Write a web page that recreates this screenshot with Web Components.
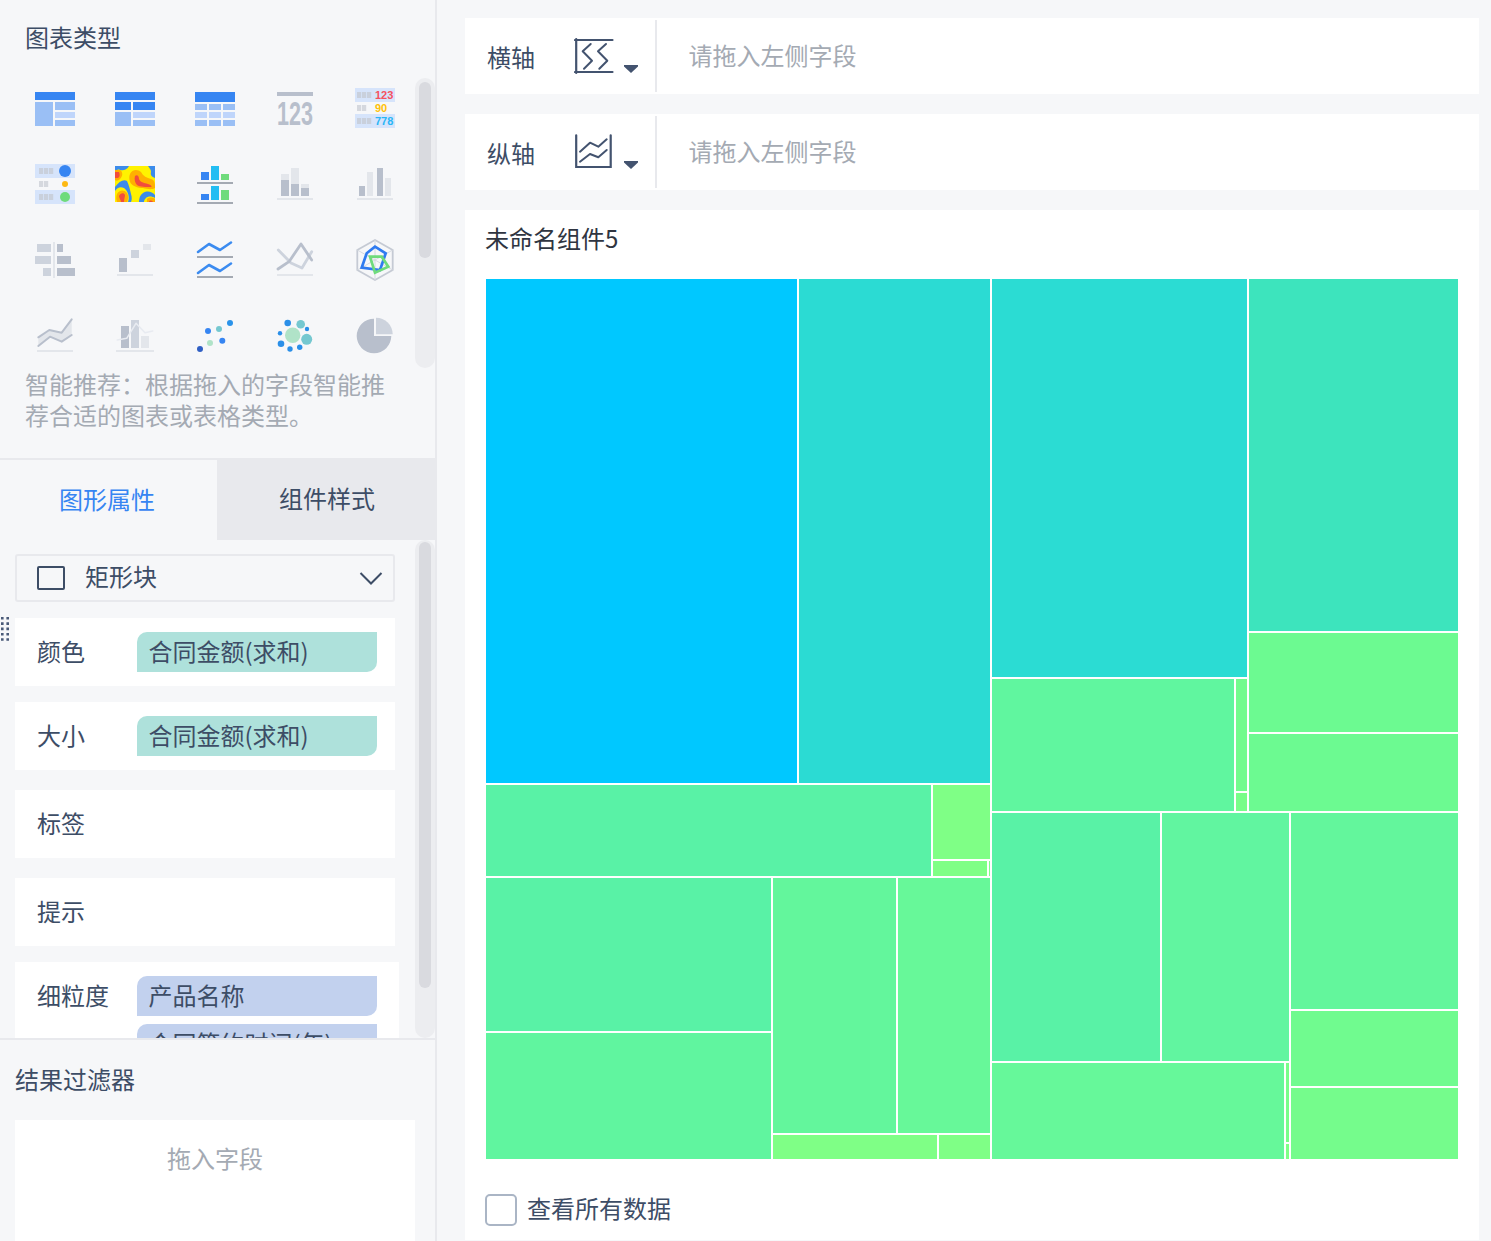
<!DOCTYPE html>
<html lang="zh">
<head>
<meta charset="utf-8">
<title>组件</title>
<style>
  html, body { margin: 0; height: 1241px; overflow: hidden; background: #f6f7f9; }
  body { font-family: "Noto Sans CJK SC", "Noto Sans", sans-serif; font-size: 24px; color: #3d4d66; }
</style>
</head>
<body>
<editor-page>
  <chart-types slot="top"></chart-types>
  <prop-tabs slot="tabs"></prop-tabs>
  <prop-panel slot="props">
    <shape-select>矩形块</shape-select>
    <prop-row label="颜色"><field-chip>合同金额(求和)</field-chip></prop-row>
    <prop-row label="大小"><field-chip>合同金额(求和)</field-chip></prop-row>
    <prop-row label="标签" style="margin-top:4px"></prop-row>
    <prop-row label="提示" style="margin-top:4px"></prop-row>
    <prop-row label="细粒度" wide>
      <field-chip kind="dim">产品名称</field-chip>
      <field-chip kind="dim">合同签约时间(年)</field-chip>
    </prop-row>
  </prop-panel>
  <result-filter slot="filter"></result-filter>
  <axis-bar slot="main" label="横轴" icon="x"></axis-bar>
  <axis-bar slot="main" label="纵轴" icon="y"></axis-bar>
  <chart-card slot="main" title="未命名组件5"></chart-card>
</editor-page>

<script>
const DARK = '#b8bfcc', MID = '#cdd3dd', LIGHT = '#e3e6eb', BLUE = '#3685f2', B2 = '#9abff5', B3 = '#bfd5fb', PALE = '#d6e4fb', GREEN = '#6fdb7c', CYAN = '#23bdf2', GRAY = '#a4aab3', INK = '#43536f';

function r(x, y, w, h, fill) {
  return `<rect x="${x}" y="${y}" width="${w}" height="${h}" fill="${fill}"/>`;
}
function line(pts, color, w) {
  return `<polyline points="${pts}" fill="none" stroke="${color}" stroke-width="${w}" stroke-linejoin="round" stroke-linecap="round"/>`;
}
function dot(x, y, rad, fill) {
  return `<circle cx="${x}" cy="${y}" r="${rad}" fill="${fill}"/>`;
}
// the blurry "text" blocks in the list icons
function blocks(x, y, n, fill) {
  let out = '';
  for (let i = 0; i < n; i++) out += r(x + i * 5, y, 4.2, 6, fill);
  return out;
}
const axis = r(2, 34, 36, 2, LIGHT);
const NUM = 'font-family="Liberation Sans" font-weight="700" font-size="11"';

// 40x40 icons of the chart type grid, in order
const CHART_ICONS = [
  r(0,4,40,8,BLUE) + r(0,14,18,24,B2) + r(20,14,20,8,B2) + r(20,24,20,6,B3) + r(20,32,20,6,B2),
  r(0,4,40,8,BLUE) + r(0,14,16,8,BLUE) + r(18,14,22,8,BLUE) + r(0,24,16,14,B2) + r(18,24,22,6,B3) + r(18,32,22,6,B2),
  r(0,4,40,10,BLUE) + [0,14,28].map(x => r(x,16,12,6,B2) + r(x,24,12,6,B3) + r(x,32,12,6,B2)).join(''),
  r(2,4,36,4,DARK) + `<text x="2" y="37" font-family="Liberation Sans" font-weight="700" font-size="33" fill="${DARK}" textLength="36" lengthAdjust="spacingAndGlyphs">123</text>`,
  r(0,0,40,14,PALE) + r(0,26,40,14,PALE) + blocks(2,4,3,'#c9d0dc') + blocks(2,17,2,'#d5d8de') + blocks(2,30,3,'#c9d0dc')
    + `<text x="20" y="10.5" ${NUM} fill="#f5515f">123</text><text x="20" y="23.5" ${NUM} fill="#ffc107">90</text><text x="20" y="36.5" ${NUM} fill="#29b6f6">778</text>`,

  r(0,0,40,14,PALE) + r(0,26,40,14,PALE) + blocks(4,4,3,'#c9d0dc') + blocks(4,17,2,'#d5d8de') + blocks(4,30,3,'#c9d0dc')
    + dot(30,7,6,BLUE) + dot(30,20,3,'#fdb913') + dot(30,33,5,GREEN),
  r(0,2,40,36,'#fff200')
    + `<path fill="#3b8beb" d="M0 2H14C12 6 8 7 5 6 3 5 1 6 0 8ZM33 2H40V14C37 13 35 11 36 8 36 5 34 4 33 2ZM0 23C4 18 8 15 12 17 14 21 15 26 16 30 17 33 17 36 16 38H13C15 33 13 27 9 24 5 22 2 24 0 27ZM28 29C33 26 37 28 40 31V34C37 32 33 32 31 34 29 36 29 37 29 38H24C24 34 25 31 28 29Z"/>`
    + `<path fill="#ffb000" d="M0 6H5C8 8 8 12 5 15 3 17 1 17 0 16ZM15 10C17 5 23 5 26 8 28 12 32 14 36 15 40 16 40 20 40 24 37 26 32 25 28 24 23 24 17 22 15 18 14 15 14 12 15 10ZM2 30C4 26 9 25 12 29 14 32 13 36 12 38H2C1 35 1 33 2 30ZM32 35C34 33 38 33 40 35V38H32Z"/>`
    + `<path fill="#f24c3d" d="M0 8H4C5 10 5 13 3 14H0ZM20 12C22 10 24 12 24 15 25 18 29 19 33 20 37 21 37 23 36 23 31 23 25 23 22 21 20 19 19 15 20 12ZM4 32C5 29 9 28 10 31 10 33 9 35 9 38H6C6 36 4 34 4 32ZM34 38C34 36 37 36 38 38Z"/>`,
  r(6,8,8,8,BLUE) + r(16,2,8,14,CYAN) + r(26,10,8,6,GREEN) + r(2,18,36,2,GRAY) + r(6,30,8,6,BLUE) + r(16,22,8,14,CYAN) + r(26,26,8,10,GREEN) + r(2,38,36,2,GRAY),
  r(6,10,8,6,LIGHT) + r(6,16,8,16,DARK) + r(16,4,8,16,LIGHT) + r(16,20,8,12,DARK) + r(26,20,8,4,LIGHT) + r(26,24,8,8,DARK) + axis,
  r(4,22,6,10,DARK) + r(12,8,6,24,LIGHT) + r(22,4,6,28,DARK) + r(30,14,6,18,LIGHT) + axis,

  r(18,2,2,36,LIGHT) + r(2,4,14,8,MID) + r(0,16,16,8,MID) + r(8,28,8,8,MID) + r(22,4,6,8,DARK) + r(22,16,14,8,DARK) + r(22,28,18,8,DARK),
  r(4,18,8,14,DARK) + r(16,10,8,8,MID) + r(28,4,8,6,LIGHT) + axis,
  line('3,12 14,4 25,10 36,2.5', '#3b8bf0', 2.6) + r(2,16,36,2,GRAY) + line('3,33 14,25 25,31 36,23.5', '#3b8bf0', 2.6) + r(2,36,36,2,GRAY),
  line('3.3,10 16,23 27,28 36.7,11.7', MID, 2.8) + line('3,29 14,21.7 26,4 36.7,20', DARK, 2.8) + axis,
  `<path d="M2.3 10 20 0 37.7 10V30L20 40 2.3 30Z" fill="none" stroke="#c5cad4" stroke-width="1.8"/><path d="M2.3 10 37.7 30M2.3 30 37.7 10M20 0V40" stroke="#d5d9e0" stroke-width="1" fill="none"/>`
    + `<path d="M20 6.7 30.7 13.3 25 30 6.7 27.7 11.7 13.3Z" fill="none" stroke="#2f7bf0" stroke-width="2.7"/><path d="M15 16.7H26.7L33.3 26.7 20 32.7Z" fill="none" stroke="${GREEN}" stroke-width="2.7"/>`,

  `<path d="M3.3 21.3 14.3 14 26.7 16.7 36.7 3.3V19L26.7 25.7 15 20.7 3.3 30Z" fill="${LIGHT}"/>` + line('3.3,21.3 14.3,14 26.7,16.7 36.7,3.3', DARK, 2) + line('3.3,30 15,20.7 26.7,25.7 36.7,19', DARK, 2) + axis,
  r(6,10,8,22,DARK) + r(16,4,8,28,MID) + r(26,20,8,12,LIGHT) + line('2.3,24 11.7,22.3 21,7.3 30,16.7 37.7,15', '#e8ebf1', 1.6) + r(1,34,38,2,LIGHT),
  dot(5,33,3,'#2f5fc4') + dot(13,15,3,BLUE) + dot(15,27,3,'#b0e3c8') + dot(24,13,3,'#75c8d0') + dot(27.3,24.7,3,BLUE) + dot(35,7,3,'#2a93ea'),
  dot(12.7,7,3.3,'#2a8fe8') + dot(25.7,8.3,4.3,'#75c8d0') + dot(32,13,2.2,'#2a8fe8') + dot(5,17.3,2.2,'#2a8fe8') + dot(17.7,19.3,7.7,'#b0e3c8') + dot(31.7,23.3,5.5,'#75c8d0') + dot(6,27.7,3.3,'#2a8fe8') + dot(15,33,2.7,'#2a8fe8') + dot(24.7,31.3,2.7,'#2a8fe8'),
  `<path d="M19 2.7A17.3 17.3 0 1 0 36.3 20H19Z" fill="${DARK}"/><path d="M21 1.8A16.5 16.5 0 0 1 37.7 18.3H21Z" fill="${MID}"/>`
];

class EditorPage extends HTMLElement {
  constructor() {
    super();
    this.attachShadow({ mode: 'open' }).innerHTML = `
      <style>
        :host { display: grid; grid-template-columns: 437px 1fr; height: 1241px; overflow: hidden; }
        .side { border-right: 2px solid #e8e9ed; display: flex; flex-direction: column; height: 1241px; overflow: hidden; box-sizing: border-box; }
        .main { display: flex; flex-direction: column; gap: 20px; padding: 18px 12px 0 28px; }
      </style>
      <div class="side">
        <slot name="top"></slot>
        <slot name="tabs"></slot>
        <slot name="props"></slot>
        <slot name="filter"></slot>
      </div>
      <div class="main"><slot name="main"></slot></div>`;
  }
}

class ScrollTrack extends HTMLElement {
  constructor() {
    super();
    this.attachShadow({ mode: 'open' }).innerHTML = `
      <style>
        :host { display: block; position: absolute; right: 0; width: 20px; background: #ecedf0; border-radius: 10px; }
        div { position: absolute; left: 4px; width: 12px; background: #d9dadf; border-radius: 6px; }
      </style>
      <div></div>`;
  }
  connectedCallback() {
    const thumb = this.shadowRoot.querySelector('div');
    this.style.top = this.getAttribute('top') + 'px';
    this.style.height = this.getAttribute('height') + 'px';
    thumb.style.top = this.getAttribute('thumb-top') + 'px';
    thumb.style.height = this.getAttribute('thumb-height') + 'px';
  }
}

class ChartIcon extends HTMLElement {
  constructor() {
    super();
    this.attachShadow({ mode: 'open' }).innerHTML = `
      <style>:host { display: block; width: 40px; height: 40px; } svg { display: block; overflow: visible; }</style>
      <svg width="40" height="40" viewBox="0 0 40 40"></svg>`;
  }
  connectedCallback() {
    this.shadowRoot.querySelector('svg').innerHTML = CHART_ICONS[+this.getAttribute('index')];
  }
}

class ChartTypes extends HTMLElement {
  constructor() {
    super();
    let cells = '';
    for (let i = 0; i < CHART_ICONS.length; i++) cells += `<chart-icon index="${i}"></chart-icon>`;
    this.attachShadow({ mode: 'open' }).innerHTML = `
      <style>
        :host { display: block; position: relative; height: 458px; flex: none; }
        .title { height: 76px; line-height: 73px; padding-left: 25px; }
        .grid { display: grid; grid-template-columns: repeat(5, 40px); gap: 36px 40px; padding: 12px 0 0 35px; }
        .hint { margin: 12px 40px 0 25px; line-height: 31px; color: #a4aab3; }
      </style>
      <div class="title">图表类型</div>
      <div class="grid">${cells}</div>
      <div class="hint">智能推荐：根据拖入的字段智能推荐合适的图表或表格类型。</div>
      <scroll-track top="78" height="290" thumb-top="4" thumb-height="176"></scroll-track>`;
  }
}

class PropTabs extends HTMLElement {
  constructor() {
    super();
    this.attachShadow({ mode: 'open' }).innerHTML = `
      <style>
        :host { display: grid; grid-template-columns: 217px 218px; height: 82px; flex: none; text-align: center; line-height: 80px; }
        .on { color: #3685f2; border-top: 2px solid #e8e9ed; line-height: 77px; padding-right: 3px; }
        .off { background: #e8e9ed; padding-left: 2px; }
      </style>
      <div class="on">图形属性</div>
      <div class="off">组件样式</div>`;
  }
}

class PropPanel extends HTMLElement {
  constructor() {
    super();
    this.attachShadow({ mode: 'open' }).innerHTML = `
      <style>
        :host { display: block; position: relative; height: 498px; flex: none; overflow: hidden; }
        .list { display: flex; flex-direction: column; gap: 16px; padding: 14px 0 0 15px; }
        .grip { position: absolute; left: 1px; top: 77px; }
      </style>
      <div class="list"><slot></slot></div>
      <svg class="grip" width="8" height="24" viewBox="0 0 8 24" fill="#4a5a78">
        <path d="M0 0h2.6v2.6H0zM5.4 0H8v2.6H5.4zM0 5.3h2.6v2.6H0zM5.4 5.3H8v2.6H5.4zM0 10.6h2.6v2.6H0zM5.4 10.6H8v2.6H5.4zM0 15.9h2.6v2.6H0zM5.4 15.9H8v2.6H5.4zM0 21.2h2.6v2.6H0zM5.4 21.2H8v2.6H5.4z"/>
      </svg>
      <scroll-track top="0" height="498" thumb-top="2" thumb-height="446"></scroll-track>`;
  }
}

class ShapeSelect extends HTMLElement {
  constructor() {
    super();
    this.attachShadow({ mode: 'open' }).innerHTML = `
      <style>
        :host { display: flex; align-items: center; box-sizing: border-box; width: 380px; height: 48px; border: 2px solid #e8e9ed; border-radius: 3px; padding-left: 19px; }
        svg { display: block; flex: none; }
        span { flex: 1; margin-left: 19px; line-height: 40px; padding-bottom: 4px; }
        .arrow { margin-right: 10px; }
      </style>
      <svg width="30" height="26" viewBox="0 0 30 26"><rect x="2" y="2" width="26" height="22" rx="1" fill="none" stroke="#3d4d66" stroke-width="2"/></svg>
      <span><slot></slot></span>
      <svg class="arrow" width="24" height="14" viewBox="0 0 24 14"><path d="M1.5 2 12 12.5 22.5 2" fill="none" stroke="#3d4d66" stroke-width="2"/></svg>`;
  }
}

class PropRow extends HTMLElement {
  constructor() {
    super();
    this.attachShadow({ mode: 'open' }).innerHTML = `
      <style>
        :host { display: flex; box-sizing: border-box; width: 380px; min-height: 68px; background: #fff; padding: 14px 0 0 22px; flex: none; }
        :host([wide]) { width: 384px; }
        .label { width: 100px; flex: none; line-height: 37px; }
        .slot { display: flex; flex-direction: column; gap: 8px; }
      </style>
      <div class="label"></div>
      <div class="slot"><slot></slot></div>`;
  }
  connectedCallback() {
    this.shadowRoot.querySelector('.label').textContent = this.getAttribute('label');
  }
}

class FieldChip extends HTMLElement {
  constructor() {
    super();
    this.attachShadow({ mode: 'open' }).innerHTML = `
      <style>
        :host { display: block; box-sizing: border-box; width: 240px; height: 40px; line-height: 37px; padding-left: 11.5px; background: #aee1db; border-radius: 10px 0 10px 0; white-space: nowrap; }
        :host([kind="dim"]) { background: #c2d1ee; }
      </style>
      <slot></slot>`;
  }
}

class ResultFilter extends HTMLElement {
  constructor() {
    super();
    this.attachShadow({ mode: 'open' }).innerHTML = `
      <style>
        :host { display: block; border-top: 2px solid #e8e9ed; flex: 1; }
        .title { height: 80px; line-height: 78px; padding-left: 15px; }
        .drop { margin-left: 15px; width: 400px; height: 121px; background: #fff; color: #a4aab3; text-align: center; line-height: 76px; }
      </style>
      <div class="title">结果过滤器</div>
      <div class="drop">拖入字段</div>`;
  }
}

const AXIS_ICONS = {
  x: `<path d="M1 4H38.5M1 36H38.5M2.2 3V37" fill="none" stroke="${INK}" stroke-width="2.2" stroke-linecap="round"/>`
    + line('16.7,8 8.7,15.3 18,24.7 10,32.7', INK, 2) + line('32,8 24,15.3 33.3,24.7 25.3,32.7', INK, 2),
  y: `<path d="M2.2 3.3V35H36.7V3.3" fill="none" stroke="${INK}" stroke-width="2.2" stroke-linecap="round"/>`
    + line('6,19.7 16,10.7 24.3,14.7 32.7,7.3', INK, 2) + line('6,29.7 16,22 24.3,25.3 32.7,18', INK, 2)
};

class AxisBar extends HTMLElement {
  constructor() {
    super();
    this.attachShadow({ mode: 'open' }).innerHTML = `
      <style>
        :host { display: grid; grid-template-columns: 109px 50px 31px 2px 1fr; align-items: center; height: 76px; background: #fff; flex: none; }
        .label { padding-left: 22px; }
        svg { display: block; }
        .caret { margin-top: 26px; }
        .line { height: 72px; background: #e8e9ed; }
        .place { padding-left: 31.5px; color: #a4aab3; margin-top: -4px; }
      </style>
      <div class="label"></div>
      <svg class="icon" width="40" height="40" viewBox="0 0 40 40"></svg>
      <svg class="caret" width="14" height="8" viewBox="0 0 14 8"><path d="M0 0H14V1.5L7 8 0 1.5Z" fill="${INK}"/></svg>
      <div class="line"></div>
      <div class="place">请拖入左侧字段</div>`;
  }
  connectedCallback() {
    this.shadowRoot.querySelector('.label').textContent = this.getAttribute('label');
    this.shadowRoot.querySelector('.icon').innerHTML = AXIS_ICONS[this.getAttribute('icon')];
  }
}

// x0, y0, x1, y1 in page pixels, then colour
const TREE = [
  [486,279,797,783,'#00c8ff'], [799,279,990,783,'#2bdbd3'], [992,279,1247,677,'#2bdcd3'], [1249,279,1458,631,'#3de4bd'],
  [1249,633,1458,732,'#6cfa91'], [1249,734,1458,811,'#6cfa91'], [992,679,1234,811,'#60f69f'],
  [1236,679,1247,791,'#72fb8d'], [1236,793,1247,811,'#78fd89'],
  [486,785,931,876,'#59f2a6'], [933,785,990,859,'#7fff86'], [933,861,987,876,'#7fff86'], [989,861,990,876,'#7fff86'],
  [486,878,771,1031,'#59f2a6'], [486,1033,771,1159,'#60f59f'], [773,878,896,1133,'#63f69c'], [898,878,990,1133,'#67f899'],
  [773,1135,937,1159,'#7fff86'], [939,1135,990,1159,'#7fff86'],
  [992,813,1160,1061,'#59f2a6'], [1162,813,1289,1061,'#61f5a0'], [1291,813,1458,1009,'#63f69c'],
  [1291,1011,1458,1086,'#70fb8f'], [1291,1088,1458,1159,'#75fc8c'],
  [992,1063,1284,1159,'#66f89a'], [1286,1063,1289,1142,'#78fd89'], [1286,1144,1289,1159,'#7fff86']
];

class TreeMap extends HTMLElement {
  constructor() {
    super();
    const cells = TREE.map(([x0, y0, x1, y1, c]) => r(x0 - 486, y0 - 279, x1 - x0, y1 - y0, c)).join('');
    this.attachShadow({ mode: 'open' }).innerHTML = `
      <style>:host { display: block; width: 972px; height: 880px; } svg { display: block; }</style>
      <svg width="972" height="880" viewBox="0 0 972 880" shape-rendering="crispEdges">${cells}</svg>`;
  }
}

class ChartCard extends HTMLElement {
  constructor() {
    super();
    this.attachShadow({ mode: 'open' }).innerHTML = `
      <style>
        :host { display: block; height: 1030px; background: #fff; flex: none; }
        .title { height: 58px; line-height: 56px; padding-left: 20px; color: #2f3541; }
        tree-map { margin: 11px 0 0 21px; }
        .all { display: flex; align-items: center; gap: 10px; margin: 35px 0 0 20px; height: 32px; }
        .all span { line-height: 32px; padding-bottom: 4px; }
        .box { box-sizing: border-box; width: 32px; height: 32px; border: 2px solid #aab5c5; border-radius: 5px; }
      </style>
      <div class="title"></div>
      <tree-map></tree-map>
      <div class="all"><div class="box"></div><span>查看所有数据</span></div>`;
  }
  connectedCallback() {
    this.shadowRoot.querySelector('.title').textContent = this.getAttribute('title');
  }
}

customElements.define('scroll-track', ScrollTrack);
customElements.define('chart-icon', ChartIcon);
customElements.define('chart-types', ChartTypes);
customElements.define('prop-tabs', PropTabs);
customElements.define('prop-panel', PropPanel);
customElements.define('shape-select', ShapeSelect);
customElements.define('prop-row', PropRow);
customElements.define('field-chip', FieldChip);
customElements.define('result-filter', ResultFilter);
customElements.define('axis-bar', AxisBar);
customElements.define('tree-map', TreeMap);
customElements.define('chart-card', ChartCard);
customElements.define('editor-page', EditorPage);
</script>
</body>
</html>
